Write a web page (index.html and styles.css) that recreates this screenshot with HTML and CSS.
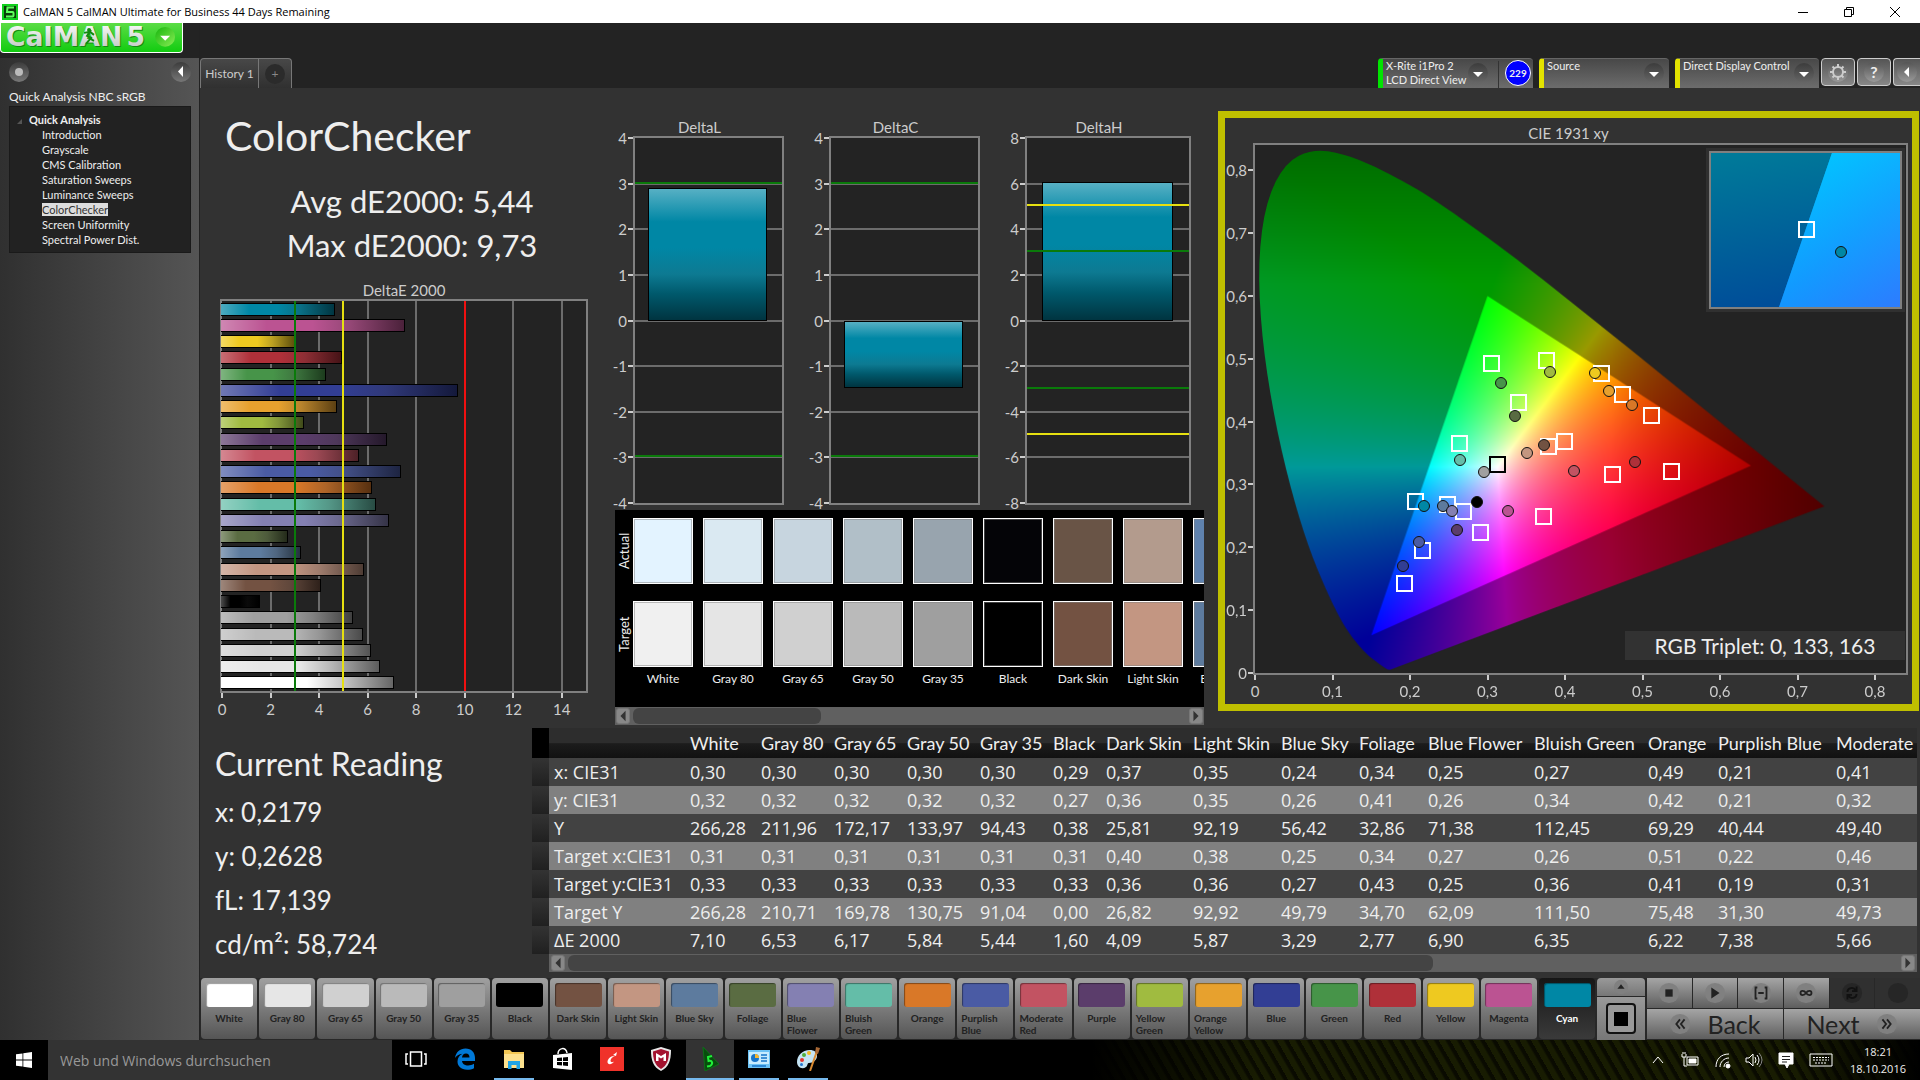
FILE: index.html
```html
<!DOCTYPE html>
<html lang="en">
  <head>
    <meta charset="UTF-8" />
    <meta name="viewport" content="width=device-width, initial-scale=1.0" />
    <title>CalMAN 5 CalMAN Ultimate for Business</title>
    <link rel="stylesheet" href="styles.css" />
    <script src="script.js" defer></script>
  </head>
  <body>
    <!-- window title -->
    <header class="titlebar">
      <svg class="app-icon" viewBox="0 0 16 16">
        <rect width="16" height="16" fill="#0a3d0a" />
        <rect x="1" y="1" width="14" height="14" fill="none" stroke="#0fd01c" stroke-width="2" />
        <path d="M12 3.500H5.500L5 8h5.500q1 0 1 1v2.500q0 1-1 1H4" fill="none" stroke="#5dff5d" stroke-width="2" />
      </svg>
      <span>CalMAN 5 CalMAN Ultimate for Business 44 Days Remaining</span>
      <div class="window-btns">
        <button aria-label="Minimize"><svg viewBox="0 0 12 12"><path d="M1 6.500h10" /></svg></button>
        <button aria-label="Restore"><svg viewBox="0 0 12 12"><path d="M1.500 3.500h7v7h-7zM3.500 3.500v-2h7v7h-2" /></svg></button>
        <button aria-label="Close"><svg viewBox="0 0 12 12"><path d="M1 1l10 10M11 1L1 11" /></svg></button>
      </div>
    </header>

    <div class="app">
      <!-- sidebar -->
      <div class="side-column">
        <div class="logo-row">
          <button class="logo" aria-label="CalMAN 5 menu">
            <svg viewBox="0 0 183 29">
              <defs>
                <linearGradient id="metal" x1="0" y1="0" x2="0" y2="1">
                  <stop offset="0" stop-color="#fff" />
                  <stop offset="1" stop-color="#bcc4bc" />
                </linearGradient>
                <linearGradient id="drop" x1="0" y1="0" x2="1" y2="1">
                  <stop offset="0" stop-color="#16b50d" />
                  <stop offset="1" stop-color="#8aed55" />
                </linearGradient>
              </defs>
              <g class="logo-shadow"><text x="6" y="24">CalMAN</text><text x="128" y="24">5</text></g>
              <g fill="url(#metal)"><text x="5" y="23">CalMAN</text><text x="127" y="23">5</text></g>
              <path d="M91 7l-4 6 4 2-5 6M84 10l6-1 4 3M89 15l5 3" fill="none" stroke="#118c0e" stroke-width="2" />
              <circle cx="89" cy="7" r="2" fill="#118c0e" />
              <circle cx="166" cy="14" r="10" fill="url(#drop)" />
              <path d="M161 13h10l-5 5z" fill="#fff" />
            </svg>
          </button>
        </div>
        <aside class="sidebar">
          <div class="side-tools">
            <button class="round" aria-label="Record"><i class="ball"></i></button>
            <button class="round" aria-label="Collapse"><svg viewBox="0 0 20 20"><path d="M12 4v11L7 9.500z" /></svg></button>
          </div>
          <div class="workflow">Quick Analysis NBC sRGB</div>
          <nav class="tree">
            <a class="root" href="#">Quick Analysis</a>
            <ul>
              <li><a href="#">Introduction</a></li>
              <li><a href="#">Grayscale</a></li>
              <li><a href="#">CMS Calibration</a></li>
              <li><a href="#">Saturation Sweeps</a></li>
              <li><a href="#">Luminance Sweeps</a></li>
              <li><a class="active" href="#">ColorChecker</a></li>
              <li><a href="#">Screen Uniformity</a></li>
              <li><a href="#">Spectral Power Dist.</a></li>
            </ul>
          </nav>
        </aside>
      </div>

      <div class="main">
        <!-- tabs and devices -->
        <div class="toolbar">
          <div class="tabs">
            <button class="tab">History 1</button>
            <button class="tab add" aria-label="Add history"><i>+</i></button>
          </div>
          <div class="devices">
            <button class="device meter">
              <span>X-Rite i1Pro 2<br />LCD Direct View</span>
              <i class="arrow"></i>
              <b class="badge">229</b>
            </button>
            <button class="device source"><span>Source</span><i class="arrow"></i></button>
            <button class="device display"><span>Direct Display Control</span><i class="arrow"></i></button>
            <button class="tool" aria-label="Settings">
              <svg viewBox="0 0 20 20"><circle cx="10" cy="10" r="5" /><path class="teeth" d="M10 2v3M10 15v3M2 10h3M15 10h3M4.500 4.500l2 2M13.500 13.500l2 2M15.500 4.500l-2 2M6.500 13.500l-2 2" /></svg>
            </button>
            <button class="tool" aria-label="Help"><b>?</b></button>
            <button class="tool" aria-label="Hide"><svg viewBox="0 0 20 20"><path class="solid" d="M12 5v10l-5-5z" /></svg></button>
          </div>
        </div>

        <div class="workspace">
          <div class="upper">
            <section class="summary">
              <h1>ColorChecker</h1>
              <p class="stat">Avg dE2000: 5,44</p>
              <p class="stat">Max dE2000: 9,73</p>
              <h2 class="chart-title">DeltaE 2000</h2>
              <div class="plot" id="delta_e"></div>
            </section>

            <section class="middle">
              <div class="delta-charts">
                <div class="delta-chart"><h2 class="chart-title">DeltaL</h2><div class="plot" id="delta_l"></div></div>
                <div class="delta-chart"><h2 class="chart-title">DeltaC</h2><div class="plot" id="delta_c"></div></div>
                <div class="delta-chart"><h2 class="chart-title">DeltaH</h2><div class="plot" id="delta_h"></div></div>
              </div>
              <div class="compare">
                <div class="compare-side"><span>Actual</span><span>Target</span></div>
                <div class="swatches" id="swatches"></div>
              </div>
              <div class="scroll">
                <button aria-label="Scroll left"><svg viewBox="0 0 14 16"><path d="M10 2v12L4 8z" /></svg></button>
                <div class="track"><div class="thumb short"></div></div>
                <button aria-label="Scroll right"><svg viewBox="0 0 14 16"><path d="M4 2v12l6-6z" /></svg></button>
              </div>
            </section>

            <section class="cie">
              <h2 class="chart-title">CIE 1931 xy</h2>
              <div class="plot" id="cie_plot">
                <canvas id="cie_canvas" width="653" height="529"></canvas>
                <div class="inset">
                  <svg viewBox="0 0 100 100" preserveAspectRatio="none">
                    <defs>
                      <linearGradient id="in_gamut" x1="0.300" y1="0" x2="1" y2="1">
                        <stop offset="0" stop-color="#00c8ff" />
                        <stop offset="0.500" stop-color="#1a9fff" />
                        <stop offset="1" stop-color="#4078ff" />
                      </linearGradient>
                      <linearGradient id="in_left" x1="0" y1="0" x2="0" y2="1">
                        <stop offset="0" stop-color="#00c0ff" />
                        <stop offset="1" stop-color="#0084ff" />
                      </linearGradient>
                      <linearGradient id="out_gamut" x1="0" y1="0" x2="0.200" y2="1">
                        <stop offset="0" stop-color="#007b99" />
                        <stop offset="1" stop-color="#004e99" />
                      </linearGradient>
                    </defs>
                    <rect width="100" height="100" fill="url(#out_gamut)" />
                    <path d="M64 0H100V100H36z" fill="url(#in_left)" />
                    <path d="M64 0H100V100H36z" fill="url(#in_gamut)" opacity="0.700" />
                  </svg>
                  <i class="mark target inset-target"></i>
                  <i class="mark reading inset-reading"></i>
                </div>
                <div class="triplet">RGB Triplet: 0, 133, 163</div>
              </div>
            </section>
          </div>

          <div class="lower">
            <section class="current">
              <h2>Current Reading</h2>
              <p>x: 0,2179</p>
              <p>y: 0,2628</p>
              <p>fL: 17,139</p>
              <p>cd/m²: 58,724</p>
            </section>
            <section class="results">
              <div class="table-clip"><table id="results"></table></div>
              <div class="scroll">
                <button aria-label="Scroll left"><svg viewBox="0 0 14 16"><path d="M10 2v12L4 8z" /></svg></button>
                <div class="track"><div class="thumb long"></div></div>
                <button aria-label="Scroll right"><svg viewBox="0 0 14 16"><path d="M4 2v12l6-6z" /></svg></button>
              </div>
            </section>
          </div>
        </div>

        <!-- patches and measuring controls -->
        <div class="patchbar">
          <div class="patches" id="patches"></div>
          <div class="step">
            <button class="up" aria-label="Up"><svg viewBox="0 0 20 20"><circle cx="10" cy="10" r="8" /><path d="M6 12h8l-4-5z" /></svg></button>
            <button class="window" aria-label="Pattern window"><i></i></button>
          </div>
          <div class="controls">
            <div class="transport">
              <button aria-label="Stop"><svg viewBox="0 0 24 24"><circle cx="12" cy="12" r="11" /><path d="M8 8h8v8H8z" /></svg></button>
              <button aria-label="Read"><svg viewBox="0 0 24 24"><circle cx="12" cy="12" r="11" /><path d="M8 6l9 6-9 6z" /></svg></button>
              <button aria-label="Read series"><svg viewBox="0 0 24 24"><circle cx="12" cy="12" r="11" /><path class="line" d="M8 6H6v12h2M16 6h2v12h-2M9 12h6" /></svg></button>
              <button aria-label="Read continuous"><svg viewBox="0 0 24 24"><circle cx="12" cy="12" r="11" /><path class="line" d="M12 12c-2-3-6-3-6 0s4 3 6 0 6-3 6 0-4 3-6 0z" /></svg></button>
              <button class="off" aria-label="Refresh"><svg viewBox="0 0 24 24"><circle cx="12" cy="12" r="11" /><path class="line" d="M7 11c0-5 7-6 9-2M17 5v5h-5M17 13c0 5-7 6-9 2M7 19v-5h5" /></svg></button>
              <button class="off" aria-label="Idle"><svg viewBox="0 0 24 24"><circle cx="12" cy="12" r="11" /></svg></button>
            </div>
            <div class="pager">
              <button><svg viewBox="0 0 24 24"><circle cx="12" cy="12" r="11" /><path class="line" d="M12 7l-4 5 4 5M17 7l-4 5 4 5" /></svg>Back</button>
              <button>Next<svg viewBox="0 0 24 24"><circle cx="12" cy="12" r="11" /><path class="line" d="M7 7l4 5-4 5M12 7l4 5-4 5" /></svg></button>
            </div>
          </div>
        </div>
      </div>
    </div>

    <!-- windows taskbar -->
    <footer class="taskbar">
      <button class="start" aria-label="Start"><svg viewBox="0 0 16 16"><path d="M0 2.300L6.500 1.400V7.600H0zM7.300 1.300L16 0V7.600H7.300zM0 8.400H6.500V14.600L0 13.700zM7.300 8.400H16V16L7.300 14.700z" /></svg></button>
      <input class="search" type="text" placeholder="Web und Windows durchsuchen" aria-label="Web und Windows durchsuchen" />
      <div class="tasks">
        <button aria-label="Task view"><svg viewBox="0 0 24 24" fill="none" stroke="#fff" stroke-width="1.500"><path d="M6.500 5h11v14h-11zM4 7H2v10h2M20 7h2v10h-2" /></svg></button>
        <button aria-label="Edge"><svg viewBox="0 0 24 24"><path d="M2 11C3 5 7 1.500 12.500 1.500c6 0 9.500 4 9.500 9.500v3H9c.3 3 3 4.500 6.200 4.500 2 0 4-.6 5.800-1.700v4.400c-2 1-4.300 1.500-6.800 1.500C8 22.700 4.500 19 4.500 14.500c0-3.500 2-6.300 5-7.700C5.500 7 3.500 9 2 11zM9 10.500h7.500C16.500 8 15.200 6.600 13 6.600S9.300 8 9 10.500z" fill="#0078d7" /></svg></button>
        <button class="open" aria-label="Explorer"><svg viewBox="0 0 24 24"><path d="M2 3h6l2 2h12v15H2z" fill="#f3c754" /><path d="M2 7h20v14H2z" fill="#fde18e" /><path d="M6 22v-8h12v8h-3.500v-4h-5v4z" fill="#1fa4e6" /></svg></button>
        <button aria-label="Store"><svg viewBox="0 0 24 24"><path d="M2 8l19-2v17L2 21z" fill="#fff" /><path d="M7 7c0-6 8-8 9-1" fill="none" stroke="#fff" stroke-width="1.500" /><path d="M6 11l5-.5V14H6zM12 10.400l5-.4v4h-5zM6 15h5v3.500L6 18zM12 15h5v4l-5-.4z" fill="#000" /></svg></button>
        <button aria-label="Reader"><svg viewBox="0 0 24 24"><path d="M0 0h24v24H0z" fill="#f0322a" /><path d="M15.500 10c-2-1-4.500 1-5 3.500 0 2 2 2 3.500 1-2.500 4-7 3-6.500 0C8 11 12 7.500 15.500 10zM13 8l4-3-1 4z" fill="#fff" /></svg></button>
        <button aria-label="McAfee"><svg viewBox="0 0 24 24"><path d="M12 0l10 3c0 10-2 17-10 21C4 20 2 13 2 3z" fill="#e8e8e8" /><path d="M12 2l8 2.500C20 12.500 18 18.500 12 22 6 18.500 4 12.500 4 4.500z" fill="#a3122f" /><path d="M7 14V6l5 3 5-3v8h-2.500v-4L12 11.500 9.500 10v4z" fill="#fff" /></svg></button>
        <button class="open focused" aria-label="CalMAN"><svg viewBox="0 0 24 24"><path d="M5 0l16 17-14 7z" fill="#084d0d" stroke="#0e7018" /><path d="M14 9l-4 1 .5 4c4-1 5 3 1.500 5l-3 .5" fill="none" stroke="#21f03a" stroke-width="2" /></svg></button>
        <button class="open" aria-label="Control panel"><svg viewBox="0 0 24 24"><path d="M1 3h22v18H1z" fill="#6dc3f5" /><path d="M2 5h20v12H2z" fill="#c7ecff" /><circle cx="8" cy="11" r="4" fill="#1674c9" /><path d="M8 11V7a4 4 0 0 1 4 4z" fill="#f7b62e" /><path d="M14 8h6M14 11h6M14 14h6M5 19h14" stroke="#1674c9" stroke-width="1.500" /></svg></button>
        <button class="open" aria-label="Paint"><svg viewBox="0 0 24 24"><path d="M14 3C6 3 1 9 1 15c0 5 5 8 9 5 2-1.500 1-4 3-4 4 0 8-3 8-7 0-4-3-6-7-6z" fill="#c4e3f3" /><circle cx="6" cy="13" r="2" fill="#e5352d" /><circle cx="8" cy="8" r="2" fill="#50ae3c" /><circle cx="13" cy="6" r="2" fill="#f5b81e" /><circle cx="5.500" cy="17.500" r="1.500" fill="#2377d0" /><path d="M21 4l-7 20" stroke="#d98b32" stroke-width="2" /><path d="M19 6l1-6 4 1-2 6z" fill="#a86835" /></svg></button>
      </div>
      <div class="tray">
        <svg viewBox="0 0 20 20"><path d="M5 13l5-6 5 6" /></svg>
        <svg viewBox="0 0 20 20"><path d="M7 7h11v8H7zM2 4v3h4V4M4 7v9h3M3 4V2M5 4V2" /><path class="fill" d="M9 9h7v4H9z" /></svg>
        <svg viewBox="0 0 20 20"><path d="M4 17C4 9 9 4 17 4M8 17c0-5 4-9 9-9M12 17c0-3 2-5 5-5" /><circle class="fill" cx="16" cy="16" r="2" /></svg>
        <svg viewBox="0 0 20 20"><path d="M2 8h3l4-4v12l-4-4H2zM11 7q2 3 0 6M13 5q4 5 0 10" /><path stroke="#888" d="M15 3q6 7 0 14" /></svg>
        <svg viewBox="0 0 20 20"><path class="fill" d="M3 3h14v11h-4l-2 4-2-4H3z" /><path stroke="#222" d="M6 6.500h8M6 9.500h8M6 12h5" /></svg>
        <svg class="wide" viewBox="0 0 26 20"><path d="M2 4h22v12H2z" /><path stroke-dasharray="2 1" d="M5 7.500h16M5 10h16M7 13h12" /></svg>
        <div class="clock"><span>18:21</span><span>18.10.2016</span></div>
      </div>
    </footer>
  </body>
</html>
```
FILE: styles.css
```css
* {
  box-sizing: border-box;
}

body {
  margin: 0;
  height: 100vh;
  display: flex;
  flex-direction: column;
  background-color: #232323;
  color: #eee;
  font-family: Lato, "Open Sans", sans-serif;
  overflow: hidden;
}

h1,
h2,
p,
ul {
  margin: 0;
  padding: 0;
  font-weight: normal;
}

button {
  font-family: inherit;
  border: none;
  padding: 0;
  margin: 0;
  color: inherit;
  background: none;
}

a {
  color: inherit;
  text-decoration: none;
}

/* title bar */
.titlebar {
  display: flex;
  align-items: center;
  height: 23px;
  padding-left: 2px;
  background-color: #fff;
  color: #000;
  font-family: "Open Sans", "Noto Sans", sans-serif;
  font-size: 11px;
}

.app-icon {
  width: 16px;
  height: 16px;
  margin-right: 5px;
}

.window-btns {
  margin-left: auto;
  padding-right: 2px;
  display: flex;
}

.window-btns button {
  width: 46px;
}

.window-btns svg {
  width: 12px;
  height: 12px;
  display: block;
  margin: 0 auto;
  fill: none;
  stroke: #000;
}

.app {
  flex: 1;
  min-height: 0;
  display: flex;
}

/* sidebar */
.side-column {
  width: 200px;
  display: flex;
  flex-direction: column;
  border-right: 1px solid #222;
}

.logo-row {
  height: 35px;
}

.logo {
  display: block;
  width: 183px;
  height: 30px;
  border: 1px solid #fff;
  border-top: none;
  border-radius: 0 0 4px 4px;
  background: linear-gradient(#5bdc45, #12cc10);
}

.logo svg {
  display: block;
  width: 100%;
  overflow: visible;
}

.logo text {
  font-family: "DejaVu Sans", sans-serif;
  font-weight: bold;
  font-size: 27px;
}

.logo-shadow {
  fill: #138b13;
}

.sidebar {
  flex: 1;
  padding: 4px 8px 4px 9px;
  background: linear-gradient(to right, #303030, #555);
}

.side-tools {
  display: flex;
  justify-content: space-between;
}

.round {
  width: 20px;
  height: 20px;
  border-radius: 50%;
  background: linear-gradient(#3c3c3c, #777);
}

.round svg {
  display: block;
  fill: #fff;
}

.ball {
  display: block;
  width: 8px;
  height: 8px;
  margin: 6px;
  border-radius: 50%;
  background-color: #bbb;
}

.workflow {
  margin: 7px 0 1px;
  font-size: 12px;
  line-height: 16px;
  white-space: nowrap;
}

.tree {
  height: 147px;
  padding: 5px 0 0 19px;
  background-color: #222;
  border: 1px solid #1a1a1a;
  font-size: 11px;
  line-height: 15px;
}

.root {
  font-weight: bold;
  position: relative;
}

.root::before {
  content: "";
  position: absolute;
  left: -12px;
  bottom: 2px;
  border-left: 5px solid transparent;
  border-bottom: 5px solid #555;
}

.tree ul {
  list-style: none;
  padding-left: 13px;
}

.tree .active {
  background-color: #ddd;
  color: #333;
}

/* toolbar */
.main {
  flex: 1;
  min-width: 0;
  display: flex;
  flex-direction: column;
}

.toolbar {
  display: flex;
  justify-content: space-between;
  height: 65px;
  padding-top: 35px;
}

.tabs,
.devices {
  display: flex;
}

.tab {
  height: 30px;
  width: 59px;
  border: 1px solid #777;
  border-bottom: none;
  border-radius: 4px 0 0 0;
  background: linear-gradient(#484848, #303030);
  color: #ccc;
  font-size: 12px;
}

.tab.add {
  width: 33px;
  border-left: none;
  border-radius: 0 4px 0 0;
}

.tab i {
  display: block;
  width: 20px;
  margin: 0 auto;
  line-height: 20px;
  border-radius: 50%;
  background-color: #2b2b2b;
  font-style: normal;
  color: #888;
}

.device {
  position: relative;
  display: flex;
  width: 130px;
  height: 30px;
  margin-right: 6px;
  padding: 0 3px;
  border-top: 1px solid #666;
  border-left: 5px solid #e3e300;
  border-radius: 4px 4px 0 0;
  background: linear-gradient(#484848, #6c6c6c);
  text-align: left;
  font-size: 11px;
  line-height: 14px;
  white-space: nowrap;
}

.device.meter {
  width: 155px;
  border-left-color: #00e400;
}

.device.display {
  width: 144px;
  margin-right: 0;
}

.arrow {
  position: absolute;
  right: 5px;
  top: 4px;
  width: 20px;
  height: 20px;
  border-radius: 50%;
  background: linear-gradient(#3c3c3c, #666);
}

.arrow::after {
  content: "";
  position: absolute;
  left: 5px;
  top: 9px;
  border: 5px solid transparent;
  border-top-color: #fff;
}

.meter .arrow {
  right: 45px;
}

.badge {
  position: absolute;
  right: 2px;
  top: 1px;
  width: 26px;
  height: 26px;
  border: 1px solid #fff;
  border-radius: 50%;
  background-color: #00f;
  line-height: 24px;
  text-align: center;
  font-size: 10px;
}

.meter::after {
  content: "";
  position: absolute;
  right: 34px;
  top: 2px;
  bottom: 0;
  border-left: 1px solid #333;
}

.tool {
  width: 34px;
  height: 28px;
  margin-left: 2px;
  border: 1px solid #ccc;
  border-radius: 4px;
  background: linear-gradient(#555, #888);
}

.tool:last-child {
  width: 27px;
  border-right: none;
  border-radius: 4px 0 0 4px;
}

.tool svg,
.tool b {
  display: block;
  width: 20px;
  height: 20px;
  margin: 0 auto;
  border-radius: 50%;
  background: linear-gradient(#555, #999);
  font-size: 16px;
  line-height: 20px;
  fill: none;
  stroke: #ccc;
  stroke-width: 2;
}

.tool .solid {
  fill: #fff;
  stroke: none;
}

/* workspace */
.workspace {
  flex: 1;
  min-height: 0;
  display: flex;
  flex-direction: column;
  background-color: #323232;
}

.upper {
  flex: 1;
  min-height: 0;
  display: grid;
  grid-template-columns: 415fr 589fr 716fr;
}

.chart-title {
  font-size: 15px;
  line-height: 18px;
  color: #ccc;
  text-align: center;
}

.plot {
  position: relative;
  flex: 1;
  border: 2px solid #808080;
  background-color: #232323;
  color: #ccc;
  font-size: 15px;
  line-height: 18px;
}

.summary {
  display: flex;
  flex-direction: column;
  padding: 18px 27px 35px 20px;
}

.summary h1 {
  margin-bottom: 13px;
  padding-left: 5px;
  font-size: 41px;
  line-height: 60px;
}

.stat {
  padding-left: 16px;
  font-size: 31px;
  line-height: 44px;
  text-align: center;
}

.summary .chart-title {
  margin-top: 14px;
}

.middle {
  display: flex;
  flex-direction: column;
  min-width: 0;
  padding-bottom: 3px;
}

.delta-charts {
  flex: 1;
  display: grid;
  grid-template-columns: 151fr 151fr 166fr;
  gap: 45px;
  padding: 30px 13px 5px 18px;
}

.delta-chart {
  display: flex;
  flex-direction: column;
}

.delta-chart .chart-title {
  padding-right: 18px;
}

.grid-v,
.limit-v {
  position: absolute;
  top: 0;
  bottom: 0;
  width: 2px;
  margin-left: -1px;
  background-color: #6c6c6c;
}

.grid-h,
.limit-h {
  position: absolute;
  left: 0;
  right: 0;
  height: 2px;
  margin-top: -1px;
  background-color: #6c6c6c;
}

.limit-v,
.limit-h {
  z-index: 1;
}

.limit-h {
  margin-top: -2px;
}

.green {
  background-color: #0a7a0a;
}

.yellow {
  background-color: #e6e010;
}

.red {
  background-color: #f01010;
}

.label-x,
.label-y {
  position: absolute;
}

.label-x {
  top: 100%;
  width: 40px;
  margin: 2px 0 0 -20px;
  padding-top: 7px;
  text-align: center;
}

.label-x::before {
  content: "";
  position: absolute;
  top: 0;
  left: 19px;
  width: 2px;
  height: 5px;
  background-color: #ccc;
}

.label-y {
  right: 100%;
  margin: -9px 2px 0 0;
  padding-right: 6px;
}

.label-y::after {
  content: "";
  position: absolute;
  right: 0;
  top: 8px;
  width: 5px;
  height: 2px;
  background-color: #ccc;
}

.bars {
  position: absolute;
  top: 0;
  bottom: 0;
  left: -1px;
  right: 0;
  display: flex;
  flex-direction: column;
  justify-content: space-around;
}

.bar {
  height: 13px;
  border: 1px solid #000;
  border-width: 1px 1px 1px 0;
  background-image: linear-gradient(to right, rgba(255, 255, 255, 0.3), rgba(255, 255, 255, 0) 25%, rgba(60, 60, 60, 0) 50%, rgba(40, 40, 40, 0.25) 70%, rgba(0, 0, 0, 0.6));
}

.column {
  position: absolute;
  left: 9%;
  right: 10%;
  border: 1px solid #000;
  background: linear-gradient(#57b0c4, #0087a5 25%, #0087a5 45%, #0d7a92 65%, #00596c 80%, #003440);
}

/* actual / target swatches */
.compare {
  display: flex;
  height: 197px;
  background-color: #000;
  overflow: hidden;
}

.compare-side {
  width: 18px;
  flex: none;
  padding-top: 8px;
  font-size: 13px;
}

.compare-side span {
  display: block;
  height: 66px;
  margin-bottom: 17px;
  line-height: 18px;
  text-align: center;
  writing-mode: vertical-rl;
  transform: rotate(180deg);
}

.swatches {
  display: flex;
  gap: 10px;
  padding-top: 8px;
}

.swatch {
  flex: none;
  width: 60px;
  text-align: center;
  font-size: 12px;
  white-space: nowrap;
}

.swatch i {
  display: block;
  height: 66px;
  margin-bottom: 17px;
  border: 1px solid #fff;
  box-shadow: inset 0 0 0 1px rgba(128, 128, 128, 0.5);
}

.swatch i + i {
  margin-bottom: 4px;
}

.scroll {
  display: flex;
  align-items: center;
  height: 18px;
  padding: 1px;
  background-color: #606060;
}

.scroll button {
  flex: none;
  width: 14px;
  height: 16px;
  border: 1px solid #777;
  border-radius: 3px;
  background-color: #888;
}

.scroll svg {
  display: block;
  width: 12px;
  height: 14px;
  fill: #333;
}

.track {
  flex: 1;
  padding: 0 3px;
}

.thumb {
  height: 16px;
  border-radius: 6px;
  background-color: #444;
}

.short {
  width: 34%;
}

.long {
  width: 65%;
}

/* CIE chart */
.cie {
  display: flex;
  flex-direction: column;
  margin: 23px 1px 17px 14px;
  padding: 5px 4px 29px 28px;
  border: 7px solid #bfbf00;
}

.cie .chart-title {
  padding: 1px 24px 1px 0;
}

.cie canvas {
  position: absolute;
  width: 100%;
  height: 100%;
}

.mark {
  position: absolute;
  width: 17px;
  height: 17px;
  margin: 0 0 -8px -8px;
  border: 2px solid #fff;
}

.mark.reading {
  width: 12px;
  height: 12px;
  margin: 0 0 -6px -6px;
  border: 1px solid #111;
  border-radius: 50%;
}

.mark.black {
  border-color: #000;
}

.inset {
  position: absolute;
  top: 6px;
  right: 4px;
  width: 193px;
  height: 158px;
  border: 2px solid #808080;
  outline: 3px solid #303030;
}

.inset svg {
  display: block;
  width: 100%;
  height: 100%;
}

.inset-target {
  left: 50%;
  bottom: 50%;
}

.inset-reading {
  left: 69%;
  bottom: 36%;
  background-color: #0087a5;
}

.triplet {
  position: absolute;
  right: 1px;
  bottom: 13px;
  width: 43%;
  background-color: #323232;
  color: #eee;
  font-size: 21px;
  line-height: 29px;
  text-align: center;
}

/* current reading and results */
.lower {
  display: flex;
  height: 250px;
}

.current {
  width: 332px;
  flex: none;
  padding: 13px 15px 0;
  font-size: 26px;
  line-height: 44px;
  white-space: nowrap;
}

.current h2 {
  margin-bottom: 3px;
  font-size: 32px;
  line-height: 46px;
}

.results {
  flex: 1;
  min-width: 0;
  padding-right: 3px;
}

.table-clip {
  overflow: hidden;
}

.results table {
  width: 100%;
  table-layout: fixed;
  border-collapse: collapse;
  font-family: "Open Sans", sans-serif;
  font-size: 18px;
  line-height: 28px;
  white-space: nowrap;
}

.results th,
.results td {
  height: 28px;
  padding: 0 0 0 5px;
  text-align: left;
  font-weight: normal;
}

.results thead th {
  height: 30px;
  background: linear-gradient(#2d2d2d 50%, #1c1c1c 52%, #111);
  font-family: Lato, sans-serif;
  font-size: 18px;
}

.results thead th:first-child {
  background: #000;
}

.results tbody tr {
  background-color: #424242;
}

.results tbody tr:nth-child(even) {
  background-color: #808080;
}

.results tbody td:first-child {
  background: linear-gradient(#333, #202020);
}

.results .scroll {
  margin-left: 17px;
  padding: 1px 2px;
}

/* patch bar */
.patchbar {
  display: flex;
  height: 62px;
  background-color: #282828;
  color: #222;
}

.patches {
  flex: 1;
  display: flex;
  gap: 2px;
  padding-left: 1px;
}

.patch {
  flex: 1 1 0;
  min-width: 0;
  height: 61px;
  padding: 5px 4px 0;
  border-radius: 4px;
  background: linear-gradient(#a0a0a0, #555);
  display: flex;
  flex-direction: column;
  align-items: center;
  font-size: 10px;
  font-weight: bold;
  line-height: 12px;
}

.patch i {
  flex: none;
  width: 47px;
  height: 24px;
  margin-bottom: 5px;
  border-radius: 3px;
  box-shadow: inset 1px 1px 1px rgba(0, 0, 0, 0.4);
}

.patch span {
  text-align: left;
}

.patch .nowrap {
  white-space: nowrap;
}

.patch.selected {
  background: linear-gradient(#161616, #3a3a3a);
  color: #fff;
}

.step {
  width: 48px;
  margin-left: 2px;
  display: flex;
  flex-direction: column;
  gap: 1px;
}

.step button {
  width: 48px;
  background: linear-gradient(#999, #777);
}

.step .up {
  height: 18px;
  border-radius: 4px 4px 0 0;
}

.step .up svg {
  display: block;
  width: 18px;
  height: 18px;
  margin: 0 auto;
  fill: #222;
}

.step circle,
.controls circle {
  fill: #808080;
}

.step .window {
  flex: 1;
}

.window i {
  display: block;
  width: 30px;
  height: 31px;
  margin: 0 auto;
  border: 2px solid #111;
  border-radius: 4px;
  background: linear-gradient(#000, #000) center / 14px 14px no-repeat #999;
}

.controls {
  display: flex;
  flex-direction: column;
  gap: 1px;
  width: 273px;
  margin-left: 2px;
}

.transport,
.pager {
  display: flex;
  gap: 1px;
}

.controls button {
  flex: 1;
  height: 30px;
  display: flex;
  align-items: center;
  justify-content: center;
  gap: 16px;
  background: linear-gradient(#a5a5a5, #5e5e5e);
  font-size: 25px;
}

.controls svg {
  width: 22px;
  height: 22px;
  fill: #222;
}

.controls .line {
  fill: none;
  stroke: #222;
  stroke-width: 2;
}

.controls .off {
  background: #303030;
}

.controls .off circle {
  fill: #262626;
}

.controls .off .line {
  stroke: #111;
}

/* taskbar */
.taskbar {
  display: flex;
  height: 40px;
  background: #000;
  font-family: "Open Sans", "Noto Sans", sans-serif;
}

.start {
  width: 48px;
}

.start svg {
  display: block;
  width: 16px;
  margin: 0 auto;
  fill: #fff;
}

.search {
  width: 344px;
  padding: 0 12px;
  border: none;
  background-color: #333;
  font-family: inherit;
  font-size: 14px;
}

.search::placeholder {
  color: #999;
}

.tasks {
  display: flex;
  gap: 1px;
}

.tasks button {
  width: 48px;
  border-bottom: 2px solid transparent;
}

.tasks svg {
  display: block;
  width: 24px;
  height: 24px;
  margin: 0 auto;
}

.tasks .open {
  background: linear-gradient(#76b9ed, #76b9ed) center bottom / 40px 2px no-repeat;
  background-origin: border-box;
  background-clip: border-box;
}

.tasks .focused {
  background-size: 48px 2px;
  background-color: #333;
}

.tray {
  flex: 1;
  display: flex;
  align-items: center;
  justify-content: flex-end;
  gap: 12px;
  padding-right: 14px;
  margin-left: 260px;
  background: linear-gradient(to right, #000, rgba(0, 0, 0, 0) 20%, rgba(0, 0, 0, 0) 85%, #000),
    repeating-linear-gradient(60deg, #181c02 0, #181c02 5px, #0a0b01 7px, #0a0b01 10px);
}

.tray svg {
  width: 20px;
  height: 20px;
  fill: none;
  stroke: #fff;
}

.tray svg.wide {
  width: 26px;
}

.tray .fill {
  fill: #fff;
}

.clock {
  display: flex;
  flex-direction: column;
  align-items: center;
  margin-left: 4px;
  font-size: 11px;
  line-height: 17px;
}
```
FILE: script.js
```js
const patches = [
  { name: "White", color: "#ffffff", target: "#f0f0f0", actual: "#e3f3ff", de: 7.1 },
  { name: "Gray 80", color: "#e6e6e6", target: "#e5e5e5", actual: "#dae9f2", de: 6.53 },
  { name: "Gray 65", color: "#d0d0d0", target: "#d0d0d0", actual: "#c7d5df", de: 6.17 },
  { name: "Gray 50", color: "#bababa", target: "#bababa", actual: "#b1bfc8", de: 5.84 },
  { name: "Gray 35", color: "#9f9f9f", target: "#9f9f9f", actual: "#98a4ae", de: 5.44 },
  { name: "Black", color: "#000000", target: "#000000", actual: "#040407", de: 1.6 },
  { name: "Dark Skin", color: "#735242", target: "#735242", actual: "#695446", de: 4.09 },
  { name: "Light Skin", color: "#c39682", target: "#c39682", actual: "#b39b8d", de: 5.87 },
  { name: "Blue Sky", color: "#5d7b9e", target: "#5d7b9e", actual: "#5f82ae", de: 3.29 },
  { name: "Foliage", color: "#5a6c42", de: 2.77 },
  { name: "Blue Flower", color: "#8480b2", de: 6.9 },
  { name: "Bluish Green", color: "#64bda8", de: 6.35 },
  { name: "Orange", color: "#d97828", de: 6.22 },
  { name: "Purplish Blue", color: "#4a5ba4", de: 7.38 },
  { name: "Moderate Red", color: "#c25362", de: 5.66 },
  { name: "Purple", color: "#5b3d6b", de: 6.82 },
  { name: "Yellow Green", color: "#a0bb40", de: 3.42 },
  { name: "Orange Yellow", color: "#e7a12e", de: 4.75 },
  { name: "Blue", color: "#323e94", de: 9.73 },
  { name: "Green", color: "#479449", de: 4.33 },
  { name: "Red", color: "#af3039", de: 4.97 },
  { name: "Yellow", color: "#eec920", de: 3.03 },
  { name: "Magenta", color: "#bb5392", de: 7.56 },
  { name: "Cyan", color: "#0087a5", de: 4.7 },
];

function add(parent, tag, className, text) {
  const el = document.createElement(tag);
  if (className) el.className = className;
  if (text !== undefined) el.textContent = text;
  parent.appendChild(el);
  return el;
}

/* DeltaE 2000 chart */
const deltaE = document.getElementById("delta_e");

for (let v = 0; v < 15; v += 2) {
  if (v > 0) add(deltaE, "i", "grid-v").style.left = (v / 15) * 100 + "%";
  add(deltaE, "span", "label-x", v).style.left = (v / 15) * 100 + "%";
}

const bars = add(deltaE, "div", "bars");
[...patches].reverse().forEach((patch) => {
  const bar = add(bars, "div", "bar");
  bar.style.width = (patch.de / 15) * 100 + "%";
  bar.style.backgroundColor = patch.color;
});

[[3, "green"], [5, "yellow"], [10, "red"]].forEach(([v, color]) => {
  add(deltaE, "i", "limit-v " + color).style.left = (v / 15) * 100 + "%";
});

/* DeltaL, DeltaC, DeltaH */
function deltaChart(id, max, value, limits) {
  const plot = document.getElementById(id);
  const pos = (v) => ((max - v) / (2 * max)) * 100;

  for (let v = max; v >= -max; v -= max / 4) {
    if (Math.abs(v) < max) add(plot, "i", "grid-h").style.top = pos(v) + "%";
    add(plot, "span", "label-y", v).style.top = pos(v) + "%";
  }
  const column = add(plot, "div", "column");
  column.style.top = pos(Math.max(value, 0)) + "%";
  column.style.bottom = 100 - pos(Math.min(value, 0)) + "%";

  limits.forEach(([v, color]) => {
    add(plot, "i", "limit-h " + color).style.top = pos(v) + "%";
    add(plot, "i", "limit-h " + color).style.top = pos(-v) + "%";
  });
}

deltaChart("delta_l", 4, 2.9, [[3, "green"]]);
deltaChart("delta_c", 4, -1.48, [[3, "green"]]);
deltaChart("delta_h", 8, 6.08, [[3, "green"], [5, "yellow"]]);

/* swatches */
const swatches = document.getElementById("swatches");
patches.slice(0, 9).forEach((patch) => {
  const swatch = add(swatches, "div", "swatch");
  add(swatch, "i").style.backgroundColor = patch.actual;
  add(swatch, "i").style.backgroundColor = patch.target;
  add(swatch, "span", "", patch.name);
});

/* results table */
const widths = [17, 136, 71, 73, 73, 73, 73, 53, 87, 88, 78, 69, 106, 114, 70, 118];
const rows = [
  ["x: CIE31", "0,30", "0,30", "0,30", "0,30", "0,30", "0,29", "0,37", "0,35", "0,24", "0,34", "0,25", "0,27", "0,49", "0,21", "0,41"],
  ["y: CIE31", "0,32", "0,32", "0,32", "0,32", "0,32", "0,27", "0,36", "0,35", "0,26", "0,41", "0,26", "0,34", "0,42", "0,21", "0,32"],
  ["Y", "266,28", "211,96", "172,17", "133,97", "94,43", "0,38", "25,81", "92,19", "56,42", "32,86", "71,38", "112,45", "69,29", "40,44", "49,40"],
  ["Target x:CIE31", "0,31", "0,31", "0,31", "0,31", "0,31", "0,31", "0,40", "0,38", "0,25", "0,34", "0,27", "0,26", "0,51", "0,22", "0,46"],
  ["Target y:CIE31", "0,33", "0,33", "0,33", "0,33", "0,33", "0,33", "0,36", "0,36", "0,27", "0,43", "0,25", "0,36", "0,41", "0,19", "0,31"],
  ["Target Y", "266,28", "210,71", "169,78", "130,75", "91,04", "0,00", "26,82", "92,92", "49,79", "34,70", "62,09", "111,50", "75,48", "31,30", "49,73"],
  ["ΔE 2000", "7,10", "6,53", "6,17", "5,84", "5,44", "1,60", "4,09", "5,87", "3,29", "2,77", "6,90", "6,35", "6,22", "7,38", "5,66"],
];
const table = document.getElementById("results");
const colgroup = add(table, "colgroup");
widths.forEach((w) => (add(colgroup, "col").style.width = w + "px"));
add(colgroup, "col");

const headRow = add(add(table, "thead"), "tr");
add(headRow, "th");
add(headRow, "th");
patches.slice(0, 14).forEach((patch) => add(headRow, "th", "", patch.name));
add(headRow, "th", "", "Moderate");

const tbody = add(table, "tbody");
rows.forEach((row) => {
  const tr = add(tbody, "tr");
  add(tr, "td");
  row.forEach((cell) => add(tr, "td", "", cell));
});

/* patch buttons */
const patchBar = document.getElementById("patches");
patches.forEach((patch) => {
  const btn = add(patchBar, "button", patch.name === "Cyan" ? "patch selected" : "patch");
  add(btn, "i").style.backgroundColor = patch.color;
  add(btn, "span", patch.name.length < 11 ? "nowrap" : "", patch.name);
});

/* CIE 1931 chart, both axes run from 0 to 0.84 */
const RANGE = 0.84;
const locus = [
  [0.1741, 0.005], [0.1714, 0.0051], [0.1644, 0.0109], [0.1566, 0.0177], [0.144, 0.0297], [0.1241, 0.0578],
  [0.1096, 0.0868], [0.0913, 0.1327], [0.0687, 0.2007], [0.0454, 0.295], [0.0235, 0.4127], [0.0082, 0.5384],
  [0.0039, 0.6548], [0.0139, 0.7502], [0.0389, 0.812], [0.0743, 0.8338], [0.1142, 0.8262], [0.1547, 0.8059],
  [0.1929, 0.7816], [0.2296, 0.7543], [0.3016, 0.6923], [0.3731, 0.6245], [0.4441, 0.5547], [0.5125, 0.4866],
  [0.5752, 0.4242], [0.627, 0.3725], [0.6658, 0.334], [0.6915, 0.3083], [0.719, 0.2809], [0.7347, 0.2653],
];
const gamut = [[0.64, 0.33], [0.3, 0.6], [0.15, 0.06]];

const canvas = document.getElementById("cie_canvas");
const ctx = canvas.getContext("2d");
const W = canvas.width;
const H = canvas.height;

function chromaticityLayer(brightness) {
  const layer = document.createElement("canvas");
  layer.width = W;
  layer.height = H;
  const layerCtx = layer.getContext("2d");
  const image = layerCtx.createImageData(W, H);
  for (let py = 0; py < H; py++) {
    for (let px = 0; px < W; px++) {
      const x = (px / W) * RANGE;
      const y = Math.max((1 - py / H) * RANGE, 0.001);
      const X = x / y;
      const Z = (1 - x - y) / y;
      const rgb = [
        3.2406 * X - 1.5372 - 0.4986 * Z,
        -0.9689 * X + 1.8758 + 0.0415 * Z,
        0.0557 * X - 0.204 + 1.057 * Z,
      ].map((c) => Math.max(c, 0));
      const max = Math.max(...rgb);
      // deep reds and greens fall off towards the locus
      let fall = 1 - Math.max(0, x - 0.46) * 1.75;
      fall -= Math.max(0, y - 0.62) * 1.4;
      const i = (py * W + px) * 4;
      for (let c = 0; c < 3; c++) {
        image.data[i + c] = 255 * (rgb[c] / max) * brightness * fall;
      }
      image.data[i + 3] = 255;
    }
  }
  layerCtx.putImageData(image, 0, 0);
  return layer;
}

const toPx = ([x, y]) => [(x / RANGE) * W, (1 - y / RANGE) * H];

ctx.save();
ctx.beginPath();
ctx.moveTo(...toPx(locus[0]));
for (let i = 1; i < locus.length - 1; i++) {
  const [cx, cy] = toPx(locus[i]);
  const [nx, ny] = toPx(locus[i + 1]);
  ctx.quadraticCurveTo(cx, cy, (cx + nx) / 2, (cy + ny) / 2);
}
ctx.lineTo(...toPx(locus[locus.length - 1]));
ctx.closePath();
ctx.clip();
ctx.drawImage(chromaticityLayer(0.6), 0, 0);
ctx.restore();

ctx.save();
ctx.beginPath();
gamut.forEach((p) => ctx.lineTo(...toPx(p)));
ctx.closePath();
ctx.clip();
ctx.drawImage(chromaticityLayer(1), 0, 0);
ctx.restore();

const targets = [
  [0.304, 0.491], [0.375, 0.496], [0.447, 0.475], [0.474, 0.442], [0.339, 0.43], [0.511, 0.409], [0.263, 0.364],
  [0.378, 0.36], [0.399, 0.367], [0.461, 0.315], [0.537, 0.32], [0.207, 0.272], [0.248, 0.267], [0.268, 0.256],
  [0.372, 0.248], [0.29, 0.222], [0.216, 0.194], [0.192, 0.142], [0.312, 0.331, "black"],
];
const readings = [
  [0.318, 0.461, "#479449"], [0.38, 0.479, "#a0ba40"], [0.439, 0.477, "#eec91f"], [0.457, 0.448, "#e7a02d"],
  [0.487, 0.426, "#d87727"], [0.335, 0.409, "#596b42"], [0.264, 0.339, "#64bda8"], [0.295, 0.32, "#a0a0a0"],
  [0.351, 0.35, "#c39680"], [0.373, 0.362, "#725242"], [0.411, 0.321, "#c25362"], [0.49, 0.335, "#af3039"],
  [0.218, 0.265, "#0087a5"], [0.243, 0.265, "#5d7a9d"], [0.254, 0.257, "#8480b2"], [0.326, 0.257, "#bb5393"],
  [0.286, 0.272, "#000"], [0.26, 0.227, "#5b3d6b"], [0.212, 0.208, "#4a5ba4"], [0.191, 0.17, "#323e94"],
];
const ciePlot = document.getElementById("cie_plot");

function addMark(className, x, y) {
  const mark = add(ciePlot, "i", className);
  mark.style.left = (x / RANGE) * 100 + "%";
  mark.style.bottom = (y / RANGE) * 100 + "%";
  return mark;
}

targets.forEach(([x, y, extra]) => addMark("mark target " + (extra || ""), x, y));
readings.forEach(([x, y, color]) => (addMark("mark reading", x, y).style.backgroundColor = color));

for (let n = 0; n <= 8; n++) {
  const text = n ? "0," + n : "0";
  const at = n / 10 / RANGE;
  add(ciePlot, "span", "label-x", text).style.left = at * 100 + "%";
  add(ciePlot, "span", "label-y", text).style.top = (1 - at) * 100 + "%";
}
```
